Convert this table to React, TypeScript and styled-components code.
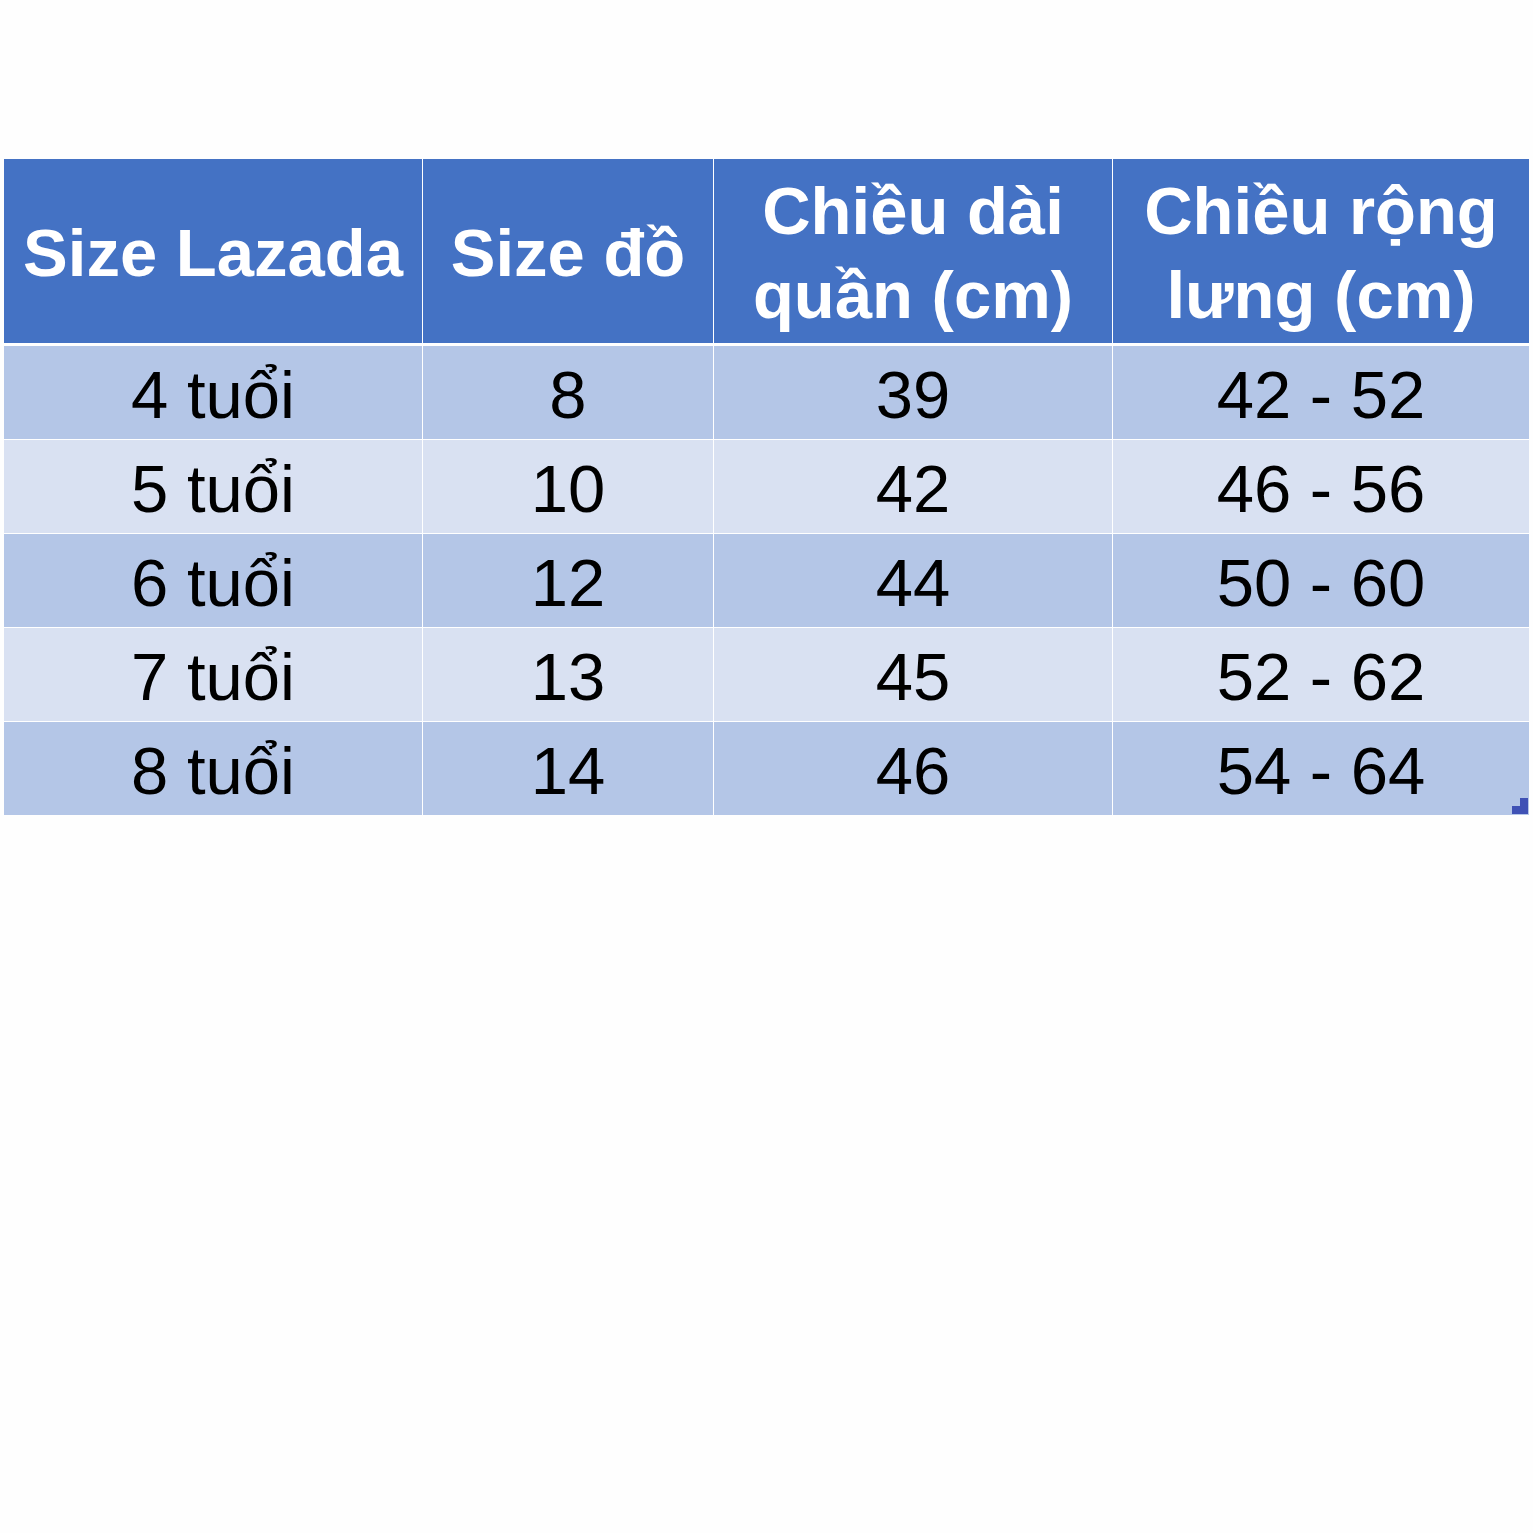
import styled, { createGlobalStyle } from "styled-components";

const GlobalStyle = createGlobalStyle`
    html, body {
        margin: 0;
        padding: 0;
        background: #ffffff;
    }
    body {
        font-family: "Liberation Sans", Arial, sans-serif;
    }
`

const Page = styled.div`
    width: 1533px;
    height: 1533px;
    padding: 159px 0 0 4px;
    box-sizing: border-box;
    background: #fefefe;
`

const Sheet = styled.div`
    position: relative;
    width: 1525px;
`

const Table = styled.table`
    width: 1525px;
    table-layout: fixed;
    border-collapse: separate;
    border-spacing: 0;
    font-family: "Liberation Sans", Arial, sans-serif;
`

const HeadCell = styled.th`
    box-sizing: border-box;
    height: 187px;
    padding: 4px 0 0 0;
    background: #4472c4;
    color: #ffffff;
    font-size: 67px;
    font-weight: 700;
    line-height: 84px;
    text-align: center;
    vertical-align: middle;
    border-bottom: 3px solid #ffffff;
    border-right: 1px solid #ffffff;
    &:last-child {
        border-right: none;
    }
`

const Row = styled.tr<{ shade: "dark" | "light" }>`
    background: ${({ shade }) => (shade === "dark" ? "#b4c6e7" : "#d9e1f2")};
`

const Cell = styled.td`
    box-sizing: border-box;
    height: 94px;
    padding: 3px 0 0 0;
    color: #000000;
    font-size: 67px;
    font-weight: 400;
    text-align: center;
    vertical-align: middle;
    border-bottom: 1px solid #ffffff;
    border-right: 1px solid #ffffff;
    &:last-child {
        border-right: none;
    }
    tr:last-child > & {
        border-bottom: none;
        height: 93px;
    }
`

const ResizeHandle = styled.div`
    position: absolute;
    right: 1px;
    bottom: 1px;
    width: 16px;
    height: 16px;
    &::before {
        content: "";
        position: absolute;
        left: 0;
        bottom: 0;
        width: 16px;
        height: 8px;
        background: #3f51b5;
    }
    &::after {
        content: "";
        position: absolute;
        right: 0;
        top: 0;
        width: 8px;
        height: 8px;
        background: #3f51b5;
    }
`

const widths = [419, 291, 399, 416]

const headers = [
    ["Size Lazada"],
    ["Size đồ"],
    ["Chiều dài", "quần (cm)"],
    ["Chiều rộng", "lưng (cm)"],
]

const rows = [
    ["4 tuổi", "8", "39", "42 - 52"],
    ["5 tuổi", "10", "42", "46 - 56"],
    ["6 tuổi", "12", "44", "50 - 60"],
    ["7 tuổi", "13", "45", "52 - 62"],
    ["8 tuổi", "14", "46", "54 - 64"],
]

export default function App() {
    return (
        <>
            <GlobalStyle />
            <Page>
                <Sheet>
                    <Table>
                        <colgroup>
                            {widths.map((w, i) => (
                                <col key={i} style={{ width: w }} />
                            ))}
                        </colgroup>
                        <thead>
                            <tr>
                                {headers.map((lines, i) => (
                                    <HeadCell key={i}>
                                        {lines.map((l, j) => (
                                            <div key={j}>{l}</div>
                                        ))}
                                    </HeadCell>
                                ))}
                            </tr>
                        </thead>
                        <tbody>
                            {rows.map((r, i) => (
                                <Row key={i} shade={i % 2 === 0 ? "dark" : "light"}>
                                    {r.map((v, j) => (
                                        <Cell key={j}>{v}</Cell>
                                    ))}
                                </Row>
                            ))}
                        </tbody>
                    </Table>
                    <ResizeHandle />
                </Sheet>
            </Page>
        </>
    )
}
